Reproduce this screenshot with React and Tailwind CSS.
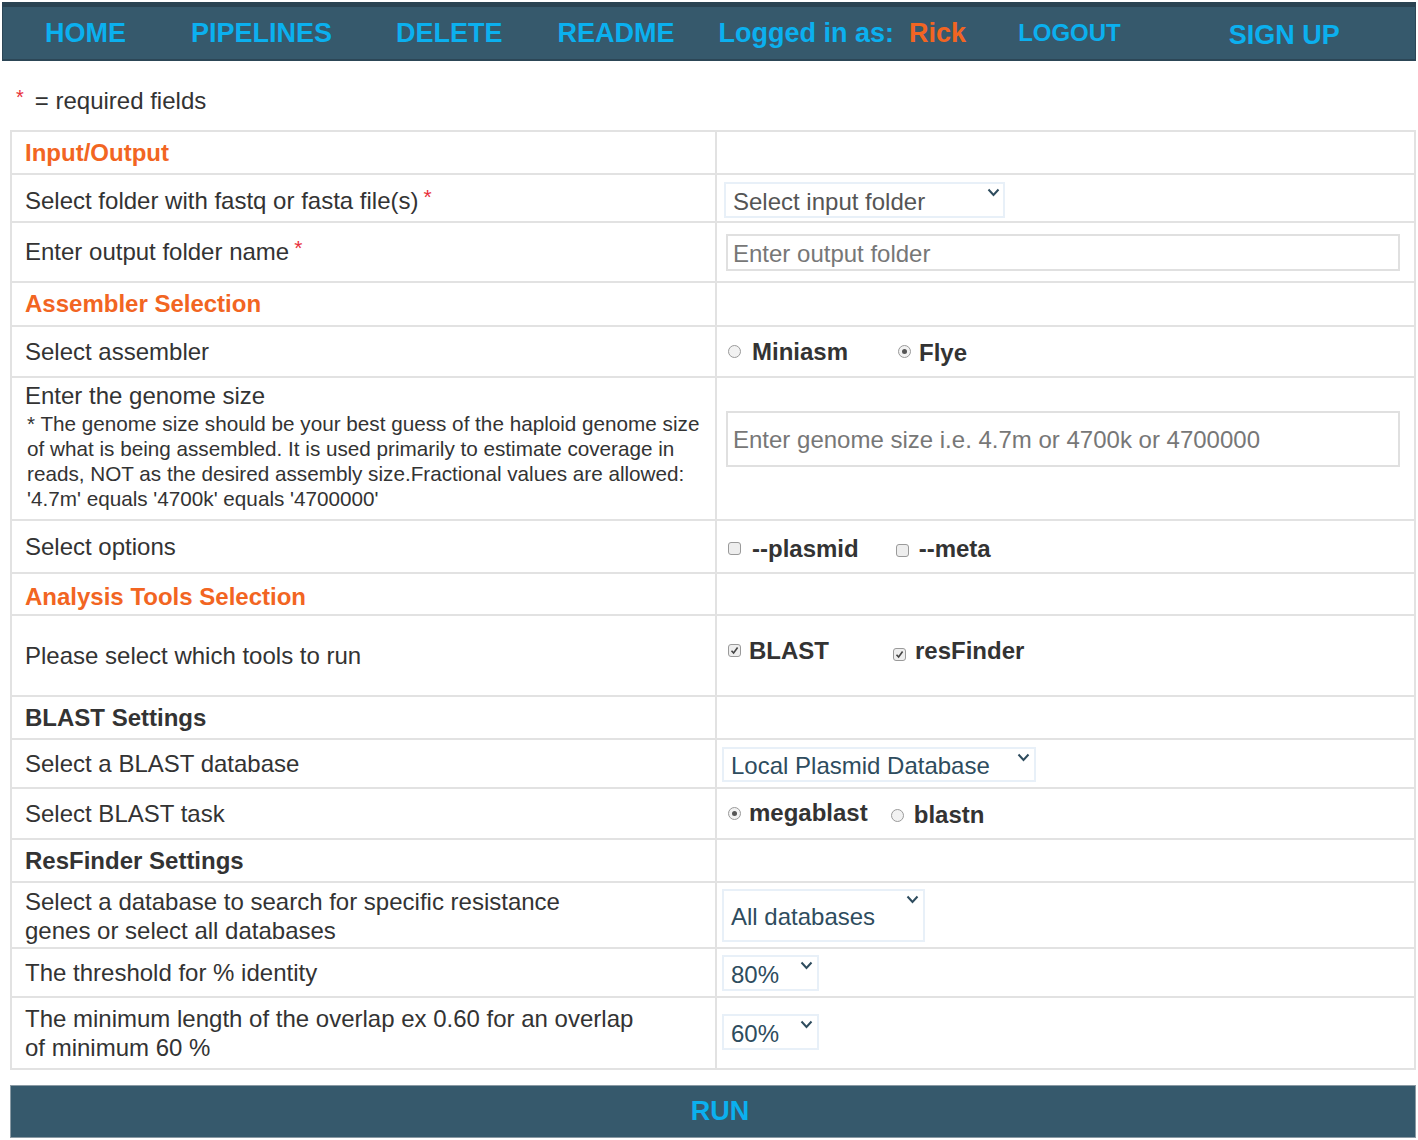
import React from 'react';

const Chevron = () => (
  <svg width="13" height="9" viewBox="0 0 13 9" className="shrink-0">
    <polyline points="1.5,1.5 6.5,7 11.5,1.5" fill="none" stroke="#2e4c5e" strokeWidth="2" />
  </svg>
);

const Radio = ({ checked }) => (
  <span className="inline-flex w-[13px] h-[13px] rounded-full border border-[#9a9a9a] bg-[#f2f2f2] items-center justify-center shrink-0">
    {checked && <span className="w-[5px] h-[5px] rounded-full bg-[#555]" />}
  </span>
);

const Check = ({ checked }) => (
  <span className="inline-flex w-[13px] h-[13px] rounded-[3px] border border-[#9a9a9a] bg-[#eeeeee] items-center justify-center shrink-0">
    {checked && (
      <svg width="9" height="9" viewBox="0 0 9 9">
        <polyline points="1.5,4.8 3.6,7 7.6,1.6" fill="none" stroke="#444" strokeWidth="1.6" />
      </svg>
    )}
  </span>
);

const Req = () => <sup className="text-[#e8303a] text-[21px] ml-[5px] relative top-[-5px]">*</sup>;

const Row = ({ h, left, right, align = 'items-center' }) => (
  <div className={`flex border-t-2 border-[#e2e2e2] ${h}`}>
    <div className={`w-[705px] border-r-2 border-[#e2e2e2] flex ${align} pl-[13px]`}>{left}</div>
    <div className="flex-1 flex items-center">{right}</div>
  </div>
);

const Header = ({ h, children, color = 'text-[#f26522]', pad = '' }) => (
  <Row h={h} left={<span className={`font-bold text-[24px] ${color} ${pad}`}>{children}</span>} />
);

const Label = ({ children }) => <span className="text-[24px] text-[#333]">{children}</span>;

const SelectBox = ({ w, h, text, textColor = 'text-[#2e4c5e]', chevX, align = 'items-end' }) => (
  <div className={`relative border-2 border-[#e8f0f8] ${w} ${h} flex ${align} pl-[7px]`}>
    <span className={`text-[24px] leading-[28px] ${textColor}`}>{text}</span>
    <span className={`absolute top-[4px] ${chevX}`}>
      <Chevron />
    </span>
  </div>
);

export default function App() {
  return (
    <div className="w-[1418px] min-h-[1140px] bg-white font-['Liberation_Sans',Arial,sans-serif] text-[#333]">
      <nav className="ml-[2px] mt-[2px] w-[1414px] h-[59px] bg-[#36596c] border-t-[5px] border-t-[#2a4352] border-b-2 border-b-[#2c4656] border-x border-x-[#2c4656] flex items-center font-bold text-[#0bb0ef] text-[27px]">
        <span className="ml-[42px]">HOME</span>
        <span className="ml-[65px]">PIPELINES</span>
        <span className="ml-[64px]">DELETE</span>
        <span className="ml-[55px]">README</span>
        <span className="ml-[44px]">Logged in as:</span>
        <span className="ml-[15px] text-[#f26522]">Rick</span>
        <span className="ml-[52px] text-[24px]">LOGOUT</span>
        <span className="ml-[108px] mt-[4px]">SIGN UP</span>
      </nav>

      <div className="flex items-center h-[69px] pt-[10px] pl-[16px] text-[24px]">
        <span className="text-[#e8303a] text-[20px] relative top-[-4px]">*</span>
        <span className="ml-[11px]">= required fields</span>
      </div>

      <div className="ml-[10px] w-[1406px] border-x-2 border-b-2 border-[#e2e2e2]">
        <Header h="h-[43px]">Input/Output</Header>
        <Row
          h="h-[48px]"
          left={<span className="pt-[5px]"><Label>Select folder with fastq or fasta file(s)<Req /></Label></span>}
          right={
            <div className="ml-[7px] mt-[4px]">
              <SelectBox w="w-[281px]" h="h-[36px]" text="Select input folder" textColor="text-[#555]" chevX="right-[3px]" />
            </div>
          }
        />
        <Row
          h="h-[60px]"
          left={<Label>Enter output folder name<Req /></Label>}
          right={
            <div className="ml-[9px] w-[674px] h-[37px] border-2 border-[#e0e0e0] flex items-center pt-[4px] pl-[5px] text-[24px] text-[#777]">
              Enter output folder
            </div>
          }
        />
        <Header h="h-[44px]">Assembler Selection</Header>
        <Row
          h="h-[51px]"
          left={<Label>Select assembler</Label>}
          right={
            <div className="flex items-center ml-[11px] text-[24px] font-bold text-[#333]">
              <Radio />
              <span className="ml-[11px]">Miniasm</span>
              <span className="ml-[50px] flex items-center">
                <Radio checked />
                <span className="ml-[8px] mt-[3px]">Flye</span>
              </span>
            </div>
          }
        />
        <Row
          h="h-[143px]"
          align="items-start"
          left={
            <div className="pt-[3px]">
              <div className="text-[24px] leading-[30px]">Enter the genome size</div>
              <div className="text-[20.7px] leading-[25px] whitespace-nowrap pl-[2px]">
                * The genome size should be your best guess of the haploid genome size
                <br />
                of what is being assembled. It is used primarily to estimate coverage in
                <br />
                reads, NOT as the desired assembly size.Fractional values are allowed:
                <br />
                '4.7m' equals '4700k' equals '4700000'
              </div>
            </div>
          }
          right={
            <div className="ml-[9px] mt-[-20px] w-[674px] h-[56px] border-2 border-[#e0e0e0] flex items-center pt-[2px] pl-[5px] text-[24px] text-[#777]">
              Enter genome size i.e. 4.7m or 4700k or 4700000
            </div>
          }
        />
        <Row
          h="h-[53px]"
          left={<Label>Select options</Label>}
          right={
            <div className="flex items-center ml-[11px] text-[24px] font-bold text-[#333] mt-[4px]">
              <Check />
              <span className="ml-[11px]">--plasmid</span>
              <span className="ml-[37px]"><Check /></span>
              <span className="ml-[10px]">--meta</span>
            </div>
          }
        />
        <Header h="h-[42px]" pad="pt-[6px]">Analysis Tools Selection</Header>
        <Row
          h="h-[81px]"
          left={<Label>Please select which tools to run</Label>}
          right={
            <div className="flex items-center ml-[11px] text-[24px] font-bold text-[#333] mt-[-10px]">
              <Check checked />
              <span className="ml-[8px]">BLAST</span>
              <span className="ml-[64px]"><Check checked /></span>
              <span className="ml-[9px]">resFinder</span>
            </div>
          }
        />
        <Header h="h-[43px]" color="text-[#333]">BLAST Settings</Header>
        <Row
          h="h-[49px]"
          left={<Label>Select a BLAST database</Label>}
          right={
            <div className="ml-[5px] mt-[1px]">
              <SelectBox w="w-[314px]" h="h-[35px]" text="Local Plasmid Database" chevX="right-[4px]" />
            </div>
          }
        />
        <Row
          h="h-[51px]"
          left={<Label>Select BLAST task</Label>}
          right={
            <div className="flex items-center ml-[11px] text-[24px] font-bold text-[#333]">
              <Radio checked />
              <span className="ml-[8px] mt-[-2px]">megablast</span>
              <span className="ml-[23px]"><Radio /></span>
              <span className="ml-[10px] mt-[2px]">blastn</span>
            </div>
          }
        />
        <Header h="h-[43px]" color="text-[#333]">ResFinder Settings</Header>
        <Row
          h="h-[66px]"
          left={
            <div className="text-[24px] leading-[29px] pt-[2px]">
              Select a database to search for specific resistance
              <br />
              genes or select all databases
            </div>
          }
          right={
            <div className="ml-[5px]">
              <SelectBox w="w-[203px]" h="h-[53px]" text="All databases" chevX="right-[4px]" align="items-center pt-[4px]" />
            </div>
          }
        />
        <Row
          h="h-[49px]"
          left={<Label>The threshold for % identity</Label>}
          right={
            <div className="ml-[5px]">
              <SelectBox w="w-[97px]" h="h-[36px]" text="80%" chevX="right-[4px]" />
            </div>
          }
        />
        <Row
          h="h-[72px]"
          left={
            <div className="text-[24px] leading-[29px]">
              The minimum length of the overlap ex 0.60 for an overlap
              <br />
              of minimum 60 %
            </div>
          }
          right={
            <div className="ml-[5px] mt-[-2px]">
              <SelectBox w="w-[97px]" h="h-[36px]" text="60%" chevX="right-[4px]" />
            </div>
          }
        />
      </div>

      <div className="mt-[15px] ml-[10px] w-[1406px] h-[53px] bg-[#36596c] border border-[#8a9aa4] flex items-center justify-center pl-[14px] text-[27px] font-bold text-[#0bb0ef]">
        RUN
      </div>
    </div>
  );
}
